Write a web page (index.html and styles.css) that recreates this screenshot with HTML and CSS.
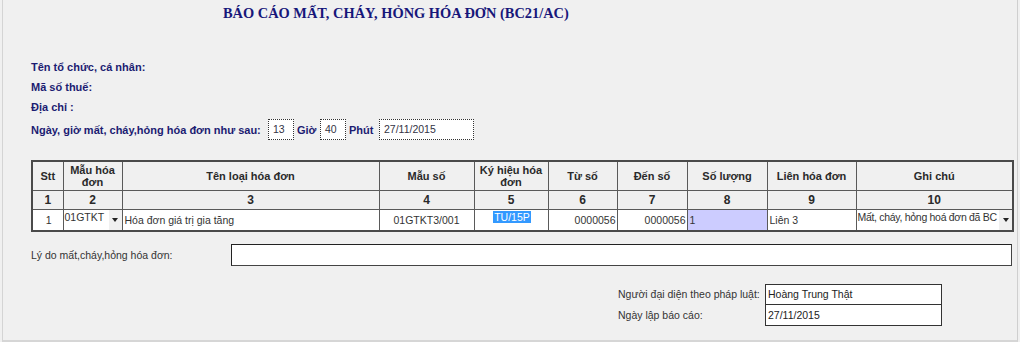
FILE: index.html
```html
<!DOCTYPE html>
<html lang="vi">
<head>
<meta charset="UTF-8" />
<title>Báo cáo mất, cháy, hỏng hóa đơn (BC21/AC)</title>
<link rel="stylesheet" href="styles.css">
</head>
<body>
<div class="frame">
  <h1 class="title">BÁO CÁO MẤT, CHÁY, HỎNG HÓA ĐƠN (BC21/AC)</h1>

  <div class="info">
    <div class="info-row r1">Tên tổ chức, cá nhân:</div>
    <div class="info-row r2">Mã số thuế:</div>
    <div class="info-row r3">Địa chỉ :</div>
    <div class="info-row r4">
      <span class="lbl-time">Ngày, giờ mất, cháy,hỏng hóa đơn như sau:</span>
      <span class="dot-box small">13</span>
      <span class="unit">Giờ</span>
      <span class="dot-box small">40</span>
      <span class="unit wide">Phút</span>
      <span class="dot-box date">27/11/2015</span>
    </div>
  </div>

  <table class="grid">
    <colgroup>
      <col style="width:31px"><col style="width:59px"><col style="width:257px"><col style="width:95px"><col style="width:74px">
      <col style="width:69px"><col style="width:70px"><col style="width:80px"><col style="width:89px"><col style="width:157px">
    </colgroup>
    <tr class="head">
      <th>Stt</th>
      <th>Mẫu hóa<br>đơn</th>
      <th>Tên loại hóa đơn</th>
      <th>Mẫu số</th>
      <th>Ký hiệu hóa<br>đơn</th>
      <th>Từ số</th>
      <th>Đến số</th>
      <th>Số lượng</th>
      <th>Liên hóa đơn</th>
      <th>Ghi chú</th>
    </tr>
    <tr class="nums">
      <th>1</th><th>2</th><th>3</th><th>4</th><th>5</th>
      <th>6</th><th>7</th><th>8</th><th>9</th><th>10</th>
    </tr>
    <tr class="data">
      <td class="c-stt">1</td>
      <td class="c-combo"><div class="combo"><span class="combo-text">01GTKT</span><span class="combo-btn"><span class="arrow"></span></span></div></td>
      <td class="c-left">Hóa đơn giá trị gia tăng</td>
      <td class="c-center">01GTKT3/001</td>
      <td class="c-sel"><span class="selected">TU/15P</span></td>
      <td class="c-right">0000056</td>
      <td class="c-right">0000056</td>
      <td class="c-qty">1</td>
      <td class="c-left">Liên 3</td>
      <td class="c-combo"><div class="combo"><span class="combo-text note">Mất, cháy, hỏng hoá đơn đã BC</span><span class="combo-btn"><span class="arrow"></span></span></div></td>
    </tr>
  </table>

  <div class="reason">
    <span class="reason-label">Lý do mất,cháy,hỏng hóa đơn:</span>
    <div class="reason-box"></div>
  </div>

  <div class="sign">
    <div class="sign-row">
      <span class="sign-label">Người đại diện theo pháp luật:</span>
      <span class="sign-box">Hoàng Trung Thật</span>
    </div>
    <div class="sign-row">
      <span class="sign-label">Ngày lập báo cáo:</span>
      <span class="sign-box next">27/11/2015</span>
    </div>
  </div>
</div>
</body>
</html>
```

FILE: styles.css
```css
/* Base */
* {
  box-sizing: border-box;
}
html, body {
  margin: 0;
  padding: 0;
  background: #f0f0f0;
  font-family: 'Liberation Sans', Arial, sans-serif;
  font-size: 11px;
  color: #222;
}

.frame {
  margin-left: 2px;
  width: 1016px;
  height: 342px;
  padding-left: 28px;
  border-left: 1px solid #d4d4d4;
  border-right: 1px solid #cfcfcf;
  border-bottom: 2px solid #d6d6d6;
}

/* Title */
.title {
  margin: 0 0 0 192px;
  padding-top: 3px;
  height: 23px;
  line-height: 20px;
  font-family: 'Liberation Serif', 'Times New Roman', serif;
  font-size: 14.4px;
  font-weight: bold;
  color: #17177a;
}

/* Organization info */
.info {
  margin-top: 34px;
  color: #1c1c72;
  font-weight: bold;
}
.info-row {
  display: flex;
  align-items: center;
}
.r1 { height: 20px; }
.r2 { height: 19px; }
.r3 { height: 22px; }
.r4 { height: 23px; }

.lbl-time {
  width: 237px;
}
.dot-box {
  height: 21px;
  line-height: 19px;
  padding-left: 4px;
  border: 1px dotted #333;
  background: #fff;
  font-weight: normal;
  font-size: 10.5px;
  color: #334;
}
.dot-box.small { width: 26px; }
.dot-box.date { width: 95px; }
.unit {
  width: 26px;
  padding-left: 3px;
}
.unit.wide { width: 33px; }

/* Invoice grid */
.grid {
  margin-top: 19px;
  width: 981px;
  table-layout: fixed;
  border-collapse: collapse;
  border: 2px solid #4a4a4a;
}
.grid th, .grid td {
  border: 1px solid #5a5a5a;
  padding: 0;
  overflow: hidden;
  white-space: nowrap;
}
.grid th {
  font-weight: bold;
  color: #2a2a2a;
  text-align: center;
  background: #f0f0f0;
}
.head th {
  height: 29px;
  line-height: 12px;
}
.nums th {
  height: 19px;
  font-size: 12px;
}
.data td {
  height: 21px;
  background: #fff;
  color: #333;
  font-size: 10.5px;
  vertical-align: middle;
}
.c-stt { text-align: center; padding-left: 2px !important; }
.c-left { padding-left: 2px !important; }
.c-center { text-align: center; }
.c-right { text-align: right; padding-right: 1px !important; }
.c-qty {
  background: #ccccff !important;
  padding-left: 2px !important;
}
.c-sel {
  text-align: center;
  vertical-align: top !important;
  padding-top: 1px !important;
}
.selected {
  background: #3399ff;
  color: #fff;
  padding: 0 1px;
  margin-left: 2px;
}

.combo {
  display: flex;
  height: 20px;
}
.combo-text {
  flex: 1;
  padding: 1px 0 0 1px;
  overflow: hidden;
  white-space: nowrap;
}
.combo-text.note {
  letter-spacing: -0.3px;
}
.combo-btn {
  width: 13px;
  background: #f0f0f0;
  display: flex;
  align-items: center;
  justify-content: center;
}
.arrow {
  width: 0;
  height: 0;
  border-left: 3.5px solid transparent;
  border-right: 3.5px solid transparent;
  border-top: 4px solid #222;
}

/* Reason */
.reason {
  display: flex;
  align-items: center;
  margin-top: 12px;
  color: #333;
  font-size: 10.5px;
}
.reason-label {
  width: 200px;
}
.reason-box {
  width: 781px;
  height: 22px;
  background: #fff;
  border: 1px solid #444;
  border-top-color: #222;
  border-left-color: #222;
}

/* Signature */
.sign {
  margin: 18px 0 0 587px;
  color: #333;
  font-size: 10.5px;
}
.sign-row {
  display: flex;
  align-items: center;
}
.sign-label {
  width: 147px;
  white-space: nowrap;
}
.sign-box {
  width: 177px;
  height: 21px;
  line-height: 19px;
  padding-left: 2px;
  background: #fff;
  border: 1px solid #333;
  color: #222;
}
.sign-box.next {
  border-top: none;
  height: 21px;
  line-height: 20px;
}
```
